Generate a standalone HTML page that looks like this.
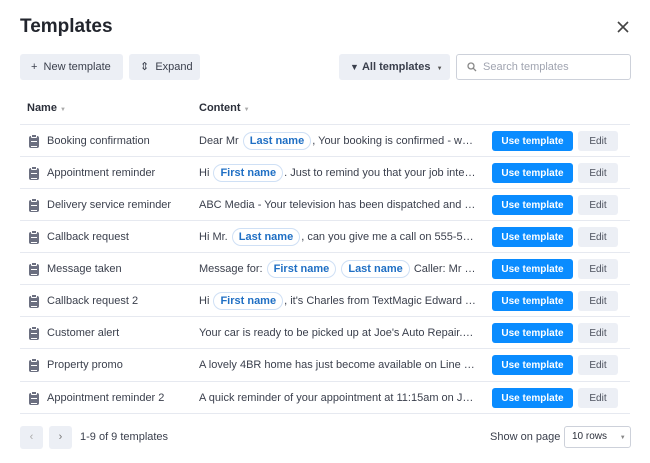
<!DOCTYPE html>
<html><head><style>
*{box-sizing:border-box;margin:0;padding:0}
body{width:650px;height:463px;background:#fff;font-family:"Liberation Sans",sans-serif;color:#2b2f3a;position:relative;overflow:hidden;font-size:11px}
.abs{position:absolute}
h1{position:absolute;left:20px;top:16px;font-size:19px;font-weight:bold;color:#22252d}
.btn{position:absolute;top:54px;height:26px;background:#eceff5;border-radius:3px;color:#3a3f4c;font-size:11px;line-height:26px;padding-left:11px;white-space:nowrap}
.row{position:absolute;left:20px;width:610px;height:32px;border-top:1px solid #e6e9f0}
.ic{position:absolute;left:9px;top:11px;width:10px;height:12px;background:#6b6f80;border-radius:2px}
.ic:before{content:"";position:absolute;left:2px;top:-2px;width:4px;height:2px;background:#6b6f80;border:1px solid #fff;border-radius:1px}
.ic:after{content:"";position:absolute;left:2px;top:5px;width:6px;height:4px;border-top:1px solid #fff;border-bottom:1px solid #fff}
.nm{position:absolute;left:27px;top:1px;line-height:31px;font-size:11px;color:#3a3f4c}
.ct{position:absolute;left:179px;top:1px;line-height:31px;width:277px;white-space:nowrap;overflow:hidden;text-overflow:ellipsis;font-size:11px;color:#3a3f4c}
.chip{display:inline-block;border:1px solid #cfe0f5;border-radius:10px;color:#1f6fc4;font-weight:bold;padding:2px 6px;margin:0 1px;line-height:12px}
.use{position:absolute;left:472px;top:6px;width:81px;height:20px;background:#0a8cff;color:#fff;border-radius:3px;font-weight:bold;font-size:10px;text-align:center;line-height:21px}
.ed{position:absolute;left:558px;top:6px;width:40px;height:20px;background:#eceff5;color:#4a4f5c;border-radius:3px;font-size:10px;text-align:center;line-height:21px}
</style></head><body>
<h1>Templates</h1>
<svg class="abs" style="left:617px;top:21px" width="12" height="12" viewBox="0 0 12 12"><path d="M1 1L11 11M11 1L1 11" stroke="#444" stroke-width="1.6"/></svg>
<div class="btn" style="left:20px;width:103px">+&nbsp;&nbsp;New template</div>
<div class="btn" style="left:129px;width:71px">⇕&nbsp;&nbsp;Expand</div>
<div class="btn" style="left:339px;width:111px;font-weight:bold"><span style="font-size:9px">▼</span>&nbsp;All templates&nbsp;&nbsp;<span style="font-size:6px;color:#555">▼</span></div>
<div class="abs" style="left:456px;top:54px;width:175px;height:26px;border:1px solid #cdd1da;border-radius:3px;color:#a0a4b0;font-size:11px;line-height:24px;padding-left:26px">Search templates</div>
<svg class="abs" style="left:467px;top:62px" width="10" height="10" viewBox="0 0 10 10"><circle cx="4" cy="4" r="3" fill="none" stroke="#888" stroke-width="1.3"/><path d="M6.2 6.2L9 9" stroke="#888" stroke-width="1.3"/></svg>
<div class="abs" style="left:27px;top:102px;font-weight:bold;font-size:11px">Name <span style="color:#aaa;font-size:6px">▼</span></div>
<div class="abs" style="left:199px;top:102px;font-weight:bold;font-size:11px">Content <span style="color:#aaa;font-size:6px">▼</span></div>

<div class="row" style="top:124px"><div class="ic"></div><div class="nm">Booking confirmation</div><div class="ct">Dear Mr <span class="chip">Last name</span>, Your booking is confirmed - we look forward</div><div class="use">Use template</div><div class="ed">Edit</div></div>
<div class="row" style="top:156px"><div class="ic"></div><div class="nm">Appointment reminder</div><div class="ct">Hi <span class="chip">First name</span>. Just to remind you that your job interview is</div><div class="use">Use template</div><div class="ed">Edit</div></div>
<div class="row" style="top:188px"><div class="ic"></div><div class="nm">Delivery service reminder</div><div class="ct">ABC Media - Your television has been dispatched and will arrive</div><div class="use">Use template</div><div class="ed">Edit</div></div>
<div class="row" style="top:220px"><div class="ic"></div><div class="nm">Callback request</div><div class="ct">Hi Mr. <span class="chip">Last name</span>, can you give me a call on 555-5555 please</div><div class="use">Use template</div><div class="ed">Edit</div></div>
<div class="row" style="top:252px"><div class="ic"></div><div class="nm">Message taken</div><div class="ct">Message for: <span class="chip">First name</span> <span class="chip">Last name</span> Caller: Mr Bond called</div><div class="use">Use template</div><div class="ed">Edit</div></div>
<div class="row" style="top:284px"><div class="ic"></div><div class="nm">Callback request 2</div><div class="ct">Hi <span class="chip">First name</span>, it's Charles from TextMagic Edward Tarrant here</div><div class="use">Use template</div><div class="ed">Edit</div></div>
<div class="row" style="top:316px"><div class="ic"></div><div class="nm">Customer alert</div><div class="ct">Your car is ready to be picked up at Joe's Auto Repair. Thank you</div><div class="use">Use template</div><div class="ed">Edit</div></div>
<div class="row" style="top:348px"><div class="ic"></div><div class="nm">Property promo</div><div class="ct">A lovely 4BR home has just become available on Line Road today</div><div class="use">Use template</div><div class="ed">Edit</div></div>
<div class="row" style="top:381px;border-bottom:1px solid #e6e9f0;height:33px"><div class="ic"></div><div class="nm">Appointment reminder 2</div><div class="ct">A quick reminder of your appointment at 11:15am on June 5th</div><div class="use">Use template</div><div class="ed">Edit</div></div>

<div class="abs" style="left:20px;top:426px;width:23px;height:23px;background:#eceff5;border-radius:3px;color:#aaa;text-align:center;line-height:23px">‹</div>
<div class="abs" style="left:49px;top:426px;width:23px;height:23px;background:#eceff5;border-radius:3px;color:#777;text-align:center;line-height:23px">›</div>
<div class="abs" style="left:80px;top:431px;font-size:11px;color:#3a3f4c">1-9 of 9 templates</div>
<div class="abs" style="left:490px;top:431px;font-size:11px;color:#3a3f4c">Show on page</div>
<div class="abs" style="left:564px;top:426px;width:67px;height:22px;border:1px solid #cdd1da;border-radius:3px;font-size:10px;line-height:20px;padding-left:7px">10 rows <span style="color:#888;font-size:6px;margin-left:10px">▼</span></div>
</body></html>
